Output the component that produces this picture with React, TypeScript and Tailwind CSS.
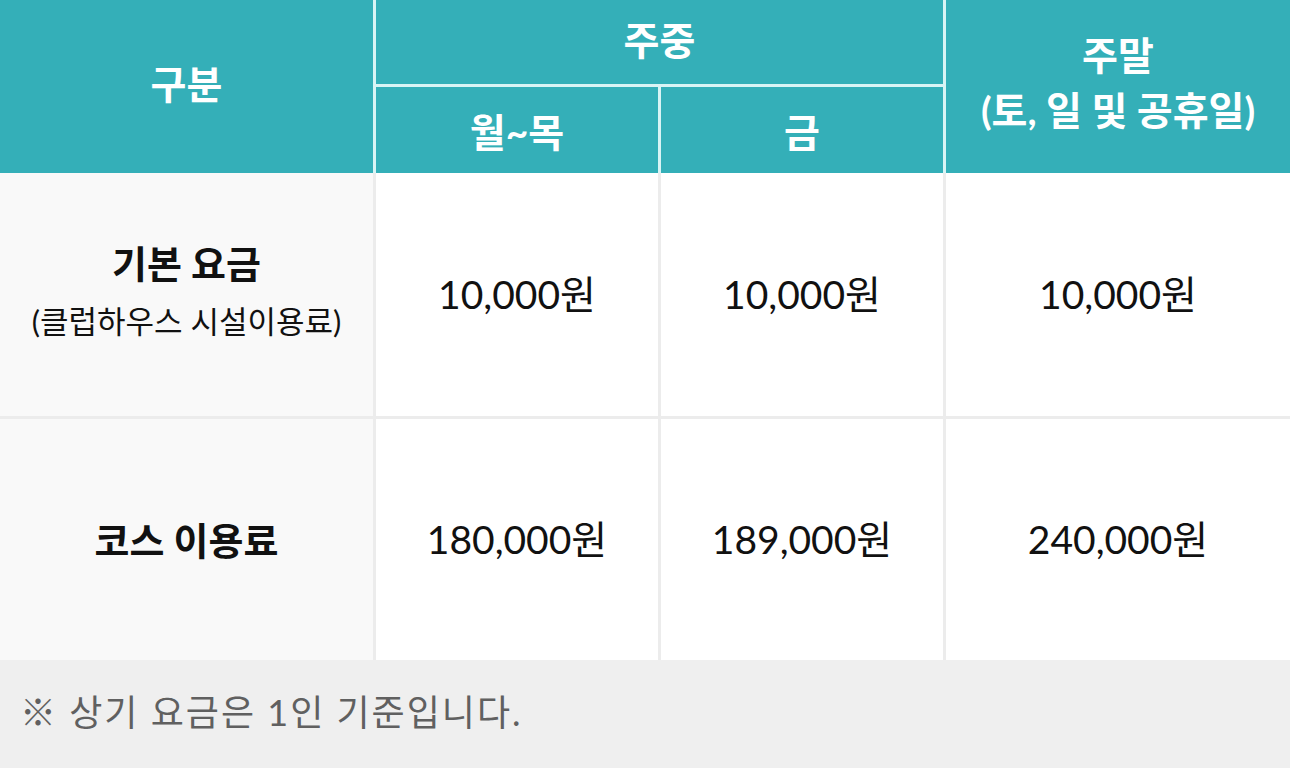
import React from 'react';

const font = { fontFamily: 'Lato, "Noto Sans CJK KR", sans-serif' };

const rows = [
  { label: '기본 요금', sub: '(클럽하우스 시설이용료)', prices: ['10,000원', '10,000원', '10,000원'] },
  { label: '코스 이용료', sub: '', prices: ['180,000원', '189,000원', '240,000원'] },
];

const App: React.FC = () => {
  return (
    <div className="w-[1290px] h-[768px] bg-white flex flex-col" style={font}>
      {/* header */}
      <div className="grid grid-cols-[376px_285px_285px_344px] grid-rows-[87px_86px] bg-[#34afb8] text-white font-bold text-[39px]">
        <div className="row-span-2 flex items-center justify-center border-r-[3px] border-[#d9f4f5] pb-1">구분</div>
        <div className="col-span-2 flex items-center justify-center border-r-[3px] border-b-[3px] border-[#d9f4f5] pb-1">주중</div>
        <div className="row-span-2 flex flex-col items-center justify-center leading-[55px] pb-2">
          <span>주말</span>
          <span>(토, 일 및 공휴일)</span>
        </div>
        <div className="flex items-center justify-center border-r-[3px] border-[#d9f4f5] pt-1">월~목</div>
        <div className="flex items-center justify-center border-r-[3px] border-[#d9f4f5] pt-1">금</div>
      </div>

      {/* body */}
      {rows.map((r, i) => (
        <div
          key={r.label}
          className={`grid grid-cols-[376px_285px_285px_344px] text-[#111] ${i === 0 ? 'h-[246px] border-b-[3px] border-[#ececec]' : 'h-[241px]'}`}
        >
          <div className="bg-[#f9f9f9] border-r-[3px] border-[#ececec] flex flex-col items-center justify-center">
            <span className="font-bold text-[38px] leading-[56px]">{r.label}</span>
            {r.sub && <span className="text-[31px] leading-[60px] pb-1">{r.sub}</span>}
          </div>
          {r.prices.map((p, j) => (
            <div
              key={j}
              className={`flex items-center justify-center text-[39px] ${j < 2 ? 'border-r-[3px] border-[#ececec]' : ''}`}
            >
              {p}
            </div>
          ))}
        </div>
      ))}

      {/* note */}
      <div className="flex-1 bg-[#efefef] flex items-center px-5 text-[36px] tracking-[2px] text-[#606060] pb-1">
        ※ 상기 요금은 1인 기준입니다.
      </div>
    </div>
  );
};

export default App;
